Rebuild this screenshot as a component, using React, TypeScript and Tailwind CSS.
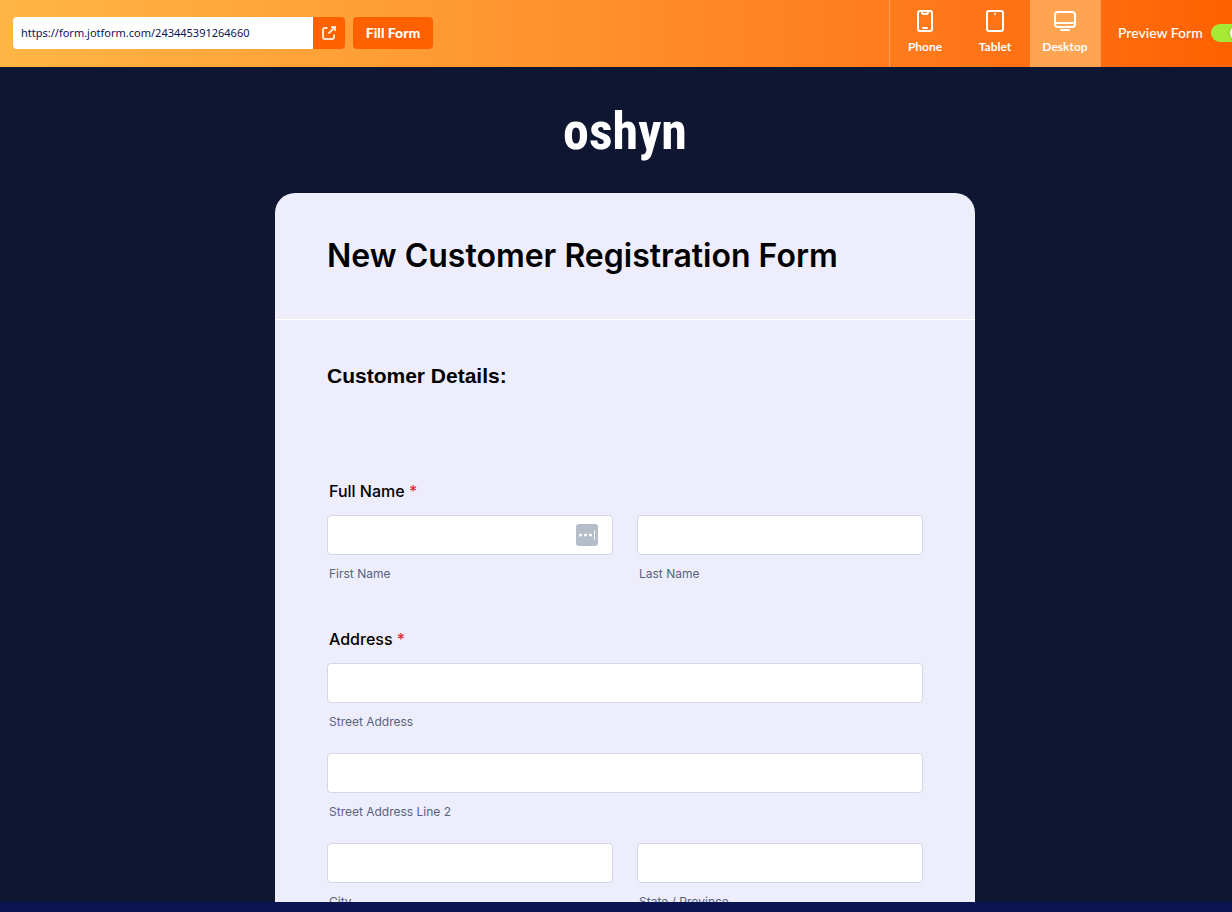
import React, { useState } from 'react'

const devices = ['Phone', 'Tablet', 'Desktop'] as const
type Device = (typeof devices)[number]

function DeviceIcon({ device }: { device: Device }) {
  return (
    <svg
      width="24"
      height="24"
      viewBox="0 0 24 24"
      fill="none"
      stroke="currentColor"
      strokeWidth="2"
      strokeLinecap="round"
      aria-hidden="true"
    >
      {device === 'Phone' && (
        <>
          <rect x="5" y="2" width="14" height="20" rx="2" />
          <path d="M9 3c0 1.500 .5 2 1.500 2h3c1 0 1.500-.5 1.500-2" />
          <path d="M10 19h4" />
        </>
      )}
      {device === 'Tablet' && (
        <>
          <rect x="4" y="2" width="16" height="20" rx="2" />
          <path d="M12 5h.01" />
        </>
      )}
      {device === 'Desktop' && (
        <>
          <rect x="2" y="3" width="20" height="15" rx="3" />
          <path d="M2 14h20" strokeLinecap="butt" />
          <path d="M8 21h8" />
        </>
      )}
    </svg>
  )
}

function TopBar() {
  const [device, setDevice] = useState<Device>('Desktop')

  return (
    <header className="flex h-[67px] shrink-0 items-center overflow-hidden bg-linear-to-r from-[#ffb644] to-[#ff6100] pl-[13px] font-['Lato',sans-serif] text-white">
      <div className="flex items-center pb-0.5">
        <input
          type="text"
          readOnly
          aria-label="Form link"
          value="https://form.jotform.com/243445391264660"
          className="h-8 w-[300px] rounded-l bg-white px-2 font-['Noto_Sans',sans-serif] text-[11px] text-[#0a1551] outline-none"
        />
        <a
          href="#form"
          aria-label="Open in new tab"
          className="flex h-8 w-8 items-center justify-center rounded-r bg-[#ff6100]"
        >
          <svg width="16" height="16" viewBox="0 0 16 16" fill="none" stroke="#ffe3d0" strokeWidth="2" aria-hidden="true">
            <path d="M6.500 3H4a2 2 0 0 0-2 2v7a2 2 0 0 0 2 2h7a2 2 0 0 0 2-2V9.500" />
            <path d="M10 2h4v4M13.500 2.500 7.500 8.500" />
          </svg>
        </a>
        <button type="button" className="ml-2 h-8 w-20 rounded bg-[#ff6100] text-sm font-black">
          Fill Form
        </button>
      </div>

      <nav className="ml-auto flex h-full border-l border-white/30">
        {devices.map((name) => (
          <button
            key={name}
            type="button"
            aria-pressed={device === name}
            onClick={() => setDevice(name)}
            className={`flex w-[70px] flex-col items-center pt-[9px] text-xs font-bold ${
              device === name ? 'bg-[#ffa450]' : ''
            }`}
          >
            <DeviceIcon device={name} />
            <span className="mt-1.5 leading-4">{name}</span>
          </button>
        ))}
      </nav>

      <label className="flex h-full w-[132px] items-center gap-2 overflow-hidden border-l border-white/30 pb-0.5 pl-[17px] text-sm font-medium whitespace-nowrap">
        Preview Form
        <input type="checkbox" defaultChecked className="peer sr-only" />
        <span className="flex h-[18px] w-9 shrink-0 items-center justify-end rounded-full bg-[#a8e938] p-px">
          <span className="h-4 w-4 rounded-full bg-white ring-2 ring-[#9bd935]" />
        </span>
      </label>
    </header>
  )
}

function Field({ id, label, children }: { id: string; label: string; children?: React.ReactNode }) {
  return (
    <div className="relative flex-1">
      <input
        id={id}
        type="text"
        className="block h-10 w-full rounded border border-[#d3d6e4] bg-white px-2.5 outline-none focus:border-[#2e69ff]"
      />
      {children}
      <label htmlFor={id} className="mt-2.5 block pl-0.5 text-xs leading-[18px] text-[#57647e]">
        {label}
      </label>
    </div>
  )
}

function Question({ title, children }: { title: string; children: React.ReactNode }) {
  return (
    <fieldset className="mb-[46px]">
      <legend className="mb-3.5 pl-0.5 text-base leading-5 font-medium text-black">
        {title} <span className="text-[#dc2d36]">*</span>
      </legend>
      <div className="flex flex-col gap-[22px]">{children}</div>
    </fieldset>
  )
}

export default function App() {
  return (
    <div className="flex h-screen flex-col overflow-hidden bg-[#0f1631]">
      <TopBar />

      <main className="min-h-0 flex-1 overflow-hidden pl-[18px] font-['Inter',sans-serif]">
        <div className="flex h-[126px] items-center justify-center pt-1 font-['Roboto_Condensed','Roboto',sans-serif] text-[52px] font-bold text-white">
          oshyn
        </div>

        <form id="form" className="mx-auto max-w-[700px] rounded-t-[20px] bg-[#eeedfb]">
          <div className="border-b border-white px-[52px] py-[43px]">
            <h1 className="text-[32px] leading-10 font-semibold text-black">New Customer Registration Form</h1>
          </div>

          <div className="px-[52px] pt-[42px]">
            <h2 className="mb-[91px] font-['Liberation_Sans',sans-serif] text-[21px] leading-7 font-bold text-black">
              Customer Details:
            </h2>

            <Question title="Full Name">
              <div className="flex gap-6">
                <Field id="first" label="First Name">
                  <svg className="absolute top-[9px] right-[15px]" width="22" height="22" viewBox="0 0 22 22" aria-hidden="true">
                    <rect width="22" height="22" rx="3" fill="#b5bdc8" />
                    <g fill="#fff">
                      <circle cx="4.500" cy="11" r="1.600" />
                      <circle cx="9.500" cy="11" r="1.600" />
                      <circle cx="14.500" cy="11" r="1.600" />
                      <rect x="18" y="6.500" width="1" height="9" />
                    </g>
                  </svg>
                </Field>
                <Field id="last" label="Last Name" />
              </div>
            </Question>

            <Question title="Address">
              <Field id="street" label="Street Address" />
              <Field id="street2" label="Street Address Line 2" />
              <div className="flex gap-6">
                <Field id="city" label="City" />
                <Field id="state" label="State / Province" />
              </div>
            </Question>
          </div>
        </form>
      </main>

      <footer className="h-2.5 shrink-0 bg-[#0a1551]" />
    </div>
  )
}
